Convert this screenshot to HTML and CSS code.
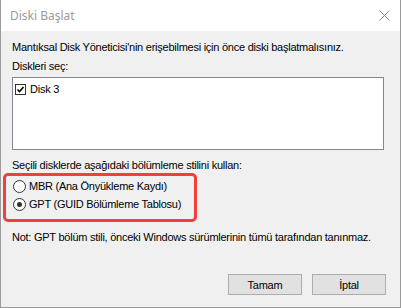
FILE: index.html
```html
<!DOCTYPE html>
<html lang="tr">
<head>
    <meta charset="UTF-8">
    <title>Diski Başlat</title>
    <link rel="stylesheet" href="styles.css">
</head>
<body>
    <div class="window">
        <div class="titlebar">
            <span class="title">Diski Başlat</span>
            <svg class="close" width="11" height="11" viewBox="0 0 11 11">
                <path d="M0.5 0.5 L10.5 10.5 M10.5 0.5 L0.5 10.5" stroke="#8a8a8a" stroke-width="1" fill="none"/>
            </svg>
        </div>
        <div class="content">
            <p class="line intro">Mantıksal Disk Yöneticisi'nin erişebilmesi için önce diski başlatmalısınız.</p>
            <p class="line pick">Diskleri seç:</p>
            <div class="disklist">
                <div class="diskitem">
                    <span class="check">
                        <svg width="9" height="9" viewBox="0 0 9 9">
                            <path d="M1.5 4.5 L3.5 6.5 L7.5 2" stroke="#000" stroke-width="1.6" fill="none"/>
                        </svg>
                    </span>
                    <span>Disk 3</span>
                </div>
            </div>
            <p class="line style">Seçili disklerde aşağıdaki bölümleme stilini kullan:</p>
            <div class="highlight">
                <div class="option"><span class="radio"></span>MBR (Ana Önyükleme Kaydı)</div>
                <div class="option"><span class="radio on"></span>GPT (GUID Bölümleme Tablosu)</div>
            </div>
            <p class="line note">Not: GPT bölüm stili, önceki Windows sürümlerinin tümü tarafından tanınmaz.</p>
            <div class="buttons">
                <button class="btn">Tamam</button>
                <button class="btn">İptal</button>
            </div>
        </div>
    </div>
</body>
</html>
```

FILE: styles.css
```css
body {
    margin: 0;
    font-family: "Liberation Sans", Arial, sans-serif;
    font-size: 11px;
    letter-spacing: -0.25px;
    color: #000;
    background-color: #f0f0f0;
}

.window {
    width: 401px;
    height: 308px;
    box-sizing: border-box;
    border: 1px solid #9a9a9a;
    border-top: none;
    background-color: #f0f0f0;
}

.titlebar {
    height: 31px;
    background-color: #fff;
    display: flex;
    align-items: center;
    justify-content: space-between;
    padding: 0 10px 0 9px;
}

.title {
    font-family: "Noto Sans", "Open Sans", sans-serif;
    font-size: 12px;
    letter-spacing: 0;
    color: #9a9a9a;
}

.close {
    display: block;
}

.content {
    padding: 10px 14px 0 11px;
}

.line {
    margin: 0;
    line-height: 13px;
    white-space: nowrap;
}

.pick {
    margin-top: 6px;
}

.disklist {
    height: 73px;
    box-sizing: border-box;
    margin: 4px 2px 0 0;
    border: 1px solid #828790;
    background-color: #fff;
    padding: 5px 2px;
}

.diskitem {
    display: flex;
    align-items: center;
    gap: 4px;
    line-height: 13px;
}

.check {
    width: 11px;
    height: 11px;
    box-sizing: border-box;
    border: 1px solid #333;
    background-color: #fff;
    display: flex;
    align-items: center;
    justify-content: center;
}

.style {
    margin-top: 9px;
}

.highlight {
    width: 181px;
    margin: 1px 0 0 -9px;
    border: 3px solid #ef3f3f;
    border-radius: 5px;
    padding: 1px 0 6px 7px;
}

.option {
    display: flex;
    align-items: center;
    gap: 3px;
    height: 18px;
    white-space: nowrap;
}

.radio {
    width: 11px;
    height: 11px;
    border: 1px solid #333;
    border-radius: 50%;
    background-color: #fff;
    position: relative;
}

.radio.on::after {
    content: "";
    position: absolute;
    top: 3px;
    left: 3px;
    width: 5px;
    height: 5px;
    border-radius: 50%;
    background-color: #333;
}

.note {
    margin-top: 9px;
}

.buttons {
    display: flex;
    justify-content: flex-end;
    gap: 10px;
    margin-top: 30px;
}

.btn {
    width: 74px;
    height: 21px;
    padding: 0;
    font-family: "Liberation Sans", Arial, sans-serif;
    font-size: 11px;
    letter-spacing: -0.25px;
    color: #000;
    background-color: #e1e1e1;
    border: 1px solid #adadad;
}
```
